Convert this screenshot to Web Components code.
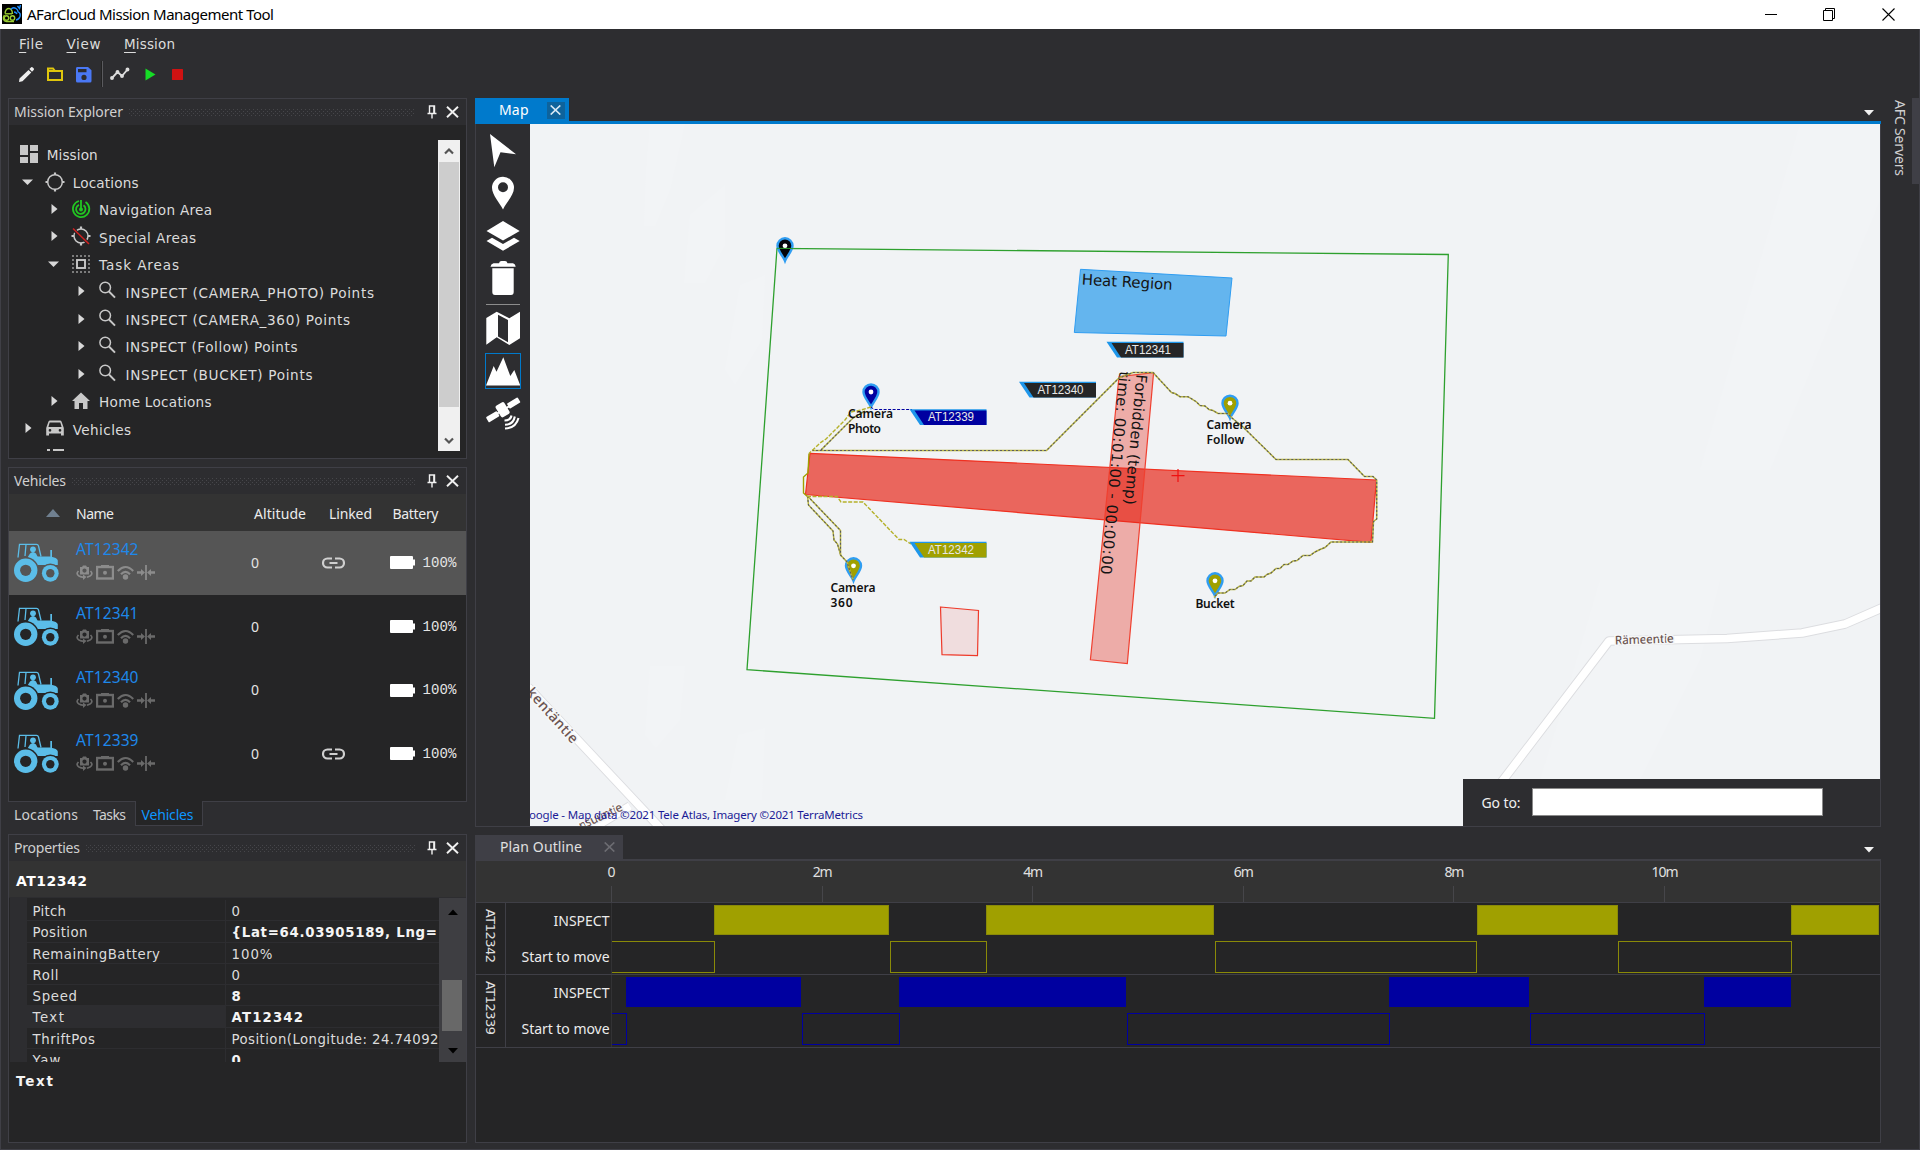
<!DOCTYPE html>
<html lang="en">
<head>
<meta charset="utf-8">
<title>AFarCloud Mission Management Tool</title>
<style>
html,body{margin:0;padding:0;height:100%;overflow:hidden;background:#2d2d30}
</style>
</head>
<body>
<afc-app></afc-app>
<script>
const SEG = '"Noto Sans","Open Sans",sans-serif';
const VER = '"DejaVu Sans",sans-serif';

function define(name, render, after) {
  customElements.define(name, class extends HTMLElement {
    connectedCallback() {
      if (this.shadowRoot) return;
      this.attachShadow({ mode: 'open' }).innerHTML = render(this);
      if (after) after(this);
    }
  });
}
const at = (el, n, d = '') => el.getAttribute(n) ?? d;

/* Text set to a given advance by spreading letter spacing */
define('fit-text', () => `<style>:host{display:inline-block;white-space:pre}span{display:inline-block}</style><span><slot></slot></span>`,
  el => {
    const w = +at(el, 'w', 0), s = el.shadowRoot.querySelector('span');
    const r = s.getBoundingClientRect(), n = el.textContent.length;
    const flat = getComputedStyle(el).writingMode === 'horizontal-tb';
    if (w && n > 1) s.style.letterSpacing = ((w - (flat ? r.width : r.height)) / (n - 1)) + 'px';
    if (w && flat) el.style.width = w + 'px';
  });

define('title-bar', () => `<style>
:host{display:flex;height:29px;background:#fff;align-items:center;font:15px/28px ${SEG};color:#000}
.ico{margin:-1px 5px 0 2px}.grow{flex:1}
svg{display:block;flex:none}.c{margin-right:46px}.c:last-child{margin-right:25px}
fit-text{margin-top:-1px}
</style>
<svg class="ico" width="20" height="20" viewBox="0 0 20 20"><rect width="20" height="20" fill="#000"/>
<g fill="none" stroke-width="1.4"><g stroke="#9acd32"><path d="M3 9.5Q3.5 4.500 7 4.500Q9 4.500 10 7L10.500 10M2.500 11Q1 13 1.500 15.500Q2.500 17.800 5 17.500H12"/><circle cx="4.500" cy="14" r="2.200"/><circle cx="10.500" cy="14" r="2.200"/><path d="M3 9.800H10"/></g>
<path stroke="#1e90ff" d="M9 5.500Q11 2.500 14 4.500Q16 5.800 16 7.800Q19 9 18 12.500Q17 15.500 14 16M15.500 2L17.500 4.500L18.500 1M12 8Q14 8 15 10"/></g></svg>
<fit-text w="247">AFarCloud Mission Management Tool</fit-text><span class="grow"></span>
<svg class="c" width="12" height="12" viewBox="0 0 12 12"><path d="M0 5.500H12" stroke="#000"/></svg>
<svg class="c" width="13" height="13" viewBox="0 0 13 13" fill="none" stroke="#000"><path d="M.5 2.500H9.500V12.500H.5ZM2.500 2.500V.5H11.500V10.500H9.500"/></svg>
<svg class="c" width="13" height="13" viewBox="0 0 13 13"><path d="M.5.5L12.500 12.500M12.500.5L.5 12.500" stroke="#000" stroke-width="1.100"/></svg>`);

define('menu-bar', () => `<style>
:host{display:flex;height:30px;font:13.500px/30px ${VER};color:#dcdcdc;padding-left:18px}
fit-text{margin-right:23.500px}u{text-underline-offset:3px}
</style><fit-text w="24"><u>F</u>ile</fit-text><fit-text w="34"><u>V</u>iew</fit-text><fit-text w="51"><u>M</u>ission</fit-text>`);

define('tool-bar', () => `<style>:host{display:flex;height:30px;align-items:center;margin-bottom:9px;padding-left:17px}svg{display:block;flex:none}
i{width:1px;height:26px;background:#5a5a5e;border-left:1px solid #222;margin:0 7px 0 9px}</style>
<svg width="17" height="17" viewBox="0 0 17 17" fill="#eee"><path d="M1 16L1.500 12.500L10.500 4L13.300 6.600L4.500 15.200ZM11.400 3.100L13.200 1.300Q14 .8 14.800 1.500L15.800 2.500Q16.300 3.200 15.700 4L14 5.800Z"/></svg>
<svg style="margin-left:11px" width="18" height="16" viewBox="0 0 18 16" fill="none" stroke="#e0c60c" stroke-width="2"><path d="M2 5H16V14H2ZM2 5V2.500H7L9 5"/></svg>
<svg style="margin-left:11px" width="17" height="17" viewBox="0 0 17 17"><path fill="#4a78f5" fill-rule="evenodd" d="M2 1H13L16.500 4.300V15Q16.500 16.500 15 16.500H2.500Q1 16.500 1 15V2.500Q1 1 2 1ZM3 3V6.200H11.500V3ZM9 8.800A2.600 2.600 0 1 0 9 14A2.600 2.600 0 1 0 9 8.800Z"/></svg>
<i></i>
<svg width="20" height="14" viewBox="0 0 20 14" stroke="#ddd" stroke-width="1.900" fill="#ddd"><path fill="none" d="M2 11L7.500 5L12 9L17.500 2.500"/><circle cx="2" cy="11" r="1"/><circle cx="7.500" cy="5" r="1"/><circle cx="12" cy="9" r="1"/><circle cx="17.500" cy="2.500" r="1"/></svg>
<svg style="margin-left:15px" width="11" height="13" viewBox="0 0 11 13"><path fill="#16dc26" d="M.5.5L10.500 6.500L.5 12.500Z"/></svg>
<svg style="margin-left:16px" width="11" height="11"><rect width="11" height="11" rx=".5" fill="#cf1212"/></svg>`);

/* Docked panel with caption, grip, pin and close */
define('dock-panel', el => `<style>
:host{display:flex;flex-direction:column;box-sizing:border-box;border:1px solid #3f3f46;background:#252526;overflow:hidden}
header{height:26px;flex:none;display:flex;align-items:center;background:#2d2d30;padding:0 7px 0 5px;font:14px/26px ${SEG};color:#d0d0d0}
.g{flex:1;margin:1px 12px 0 6px;height:8px}
svg{display:block;flex:none}slot{display:flex;flex-direction:column;flex:1;min-height:0}
</style><header><fit-text w="${at(el, 'tw')}">${at(el, 'caption')}</fit-text>
<svg class="g" height="8"><defs><pattern id="d" width="4" height="4" patternUnits="userSpaceOnUse"><path fill="#46464a" d="M0 0h1v1h-1zM2 2h1v1h-1z"/></pattern></defs><rect width="100%" height="7" fill="url(#d)"/></svg>
<svg width="10" height="14" viewBox="0 0 10 14" fill="none" stroke="#f1f1f1"><path d="M2.500 8V1H7.500V8M.5 8.500H9.500M5 9V13.500" stroke-width="1.400"/><path d="M6.700 1V8"/></svg>
<svg style="margin-left:9px" width="13" height="12" viewBox="0 0 13 12"><path d="M1 .7L12 11.300M12 .7L1 11.300" stroke="#f1f1f1" stroke-width="1.900"/></svg>
</header><slot></slot>`);

const G = '#c8c8c8';
const TREE = {
  mission: `<path fill="${G}" d="M0 0h8v10h-8zM10 0h8v6h-8zM0 12h8v6h-8zM10 8h8v10h-8z"/>`,
  loc: `<g fill="none" stroke="${G}" stroke-width="1.500"><circle cx="9" cy="9" r="7.300"/><path stroke-width="2.200" d="M9-.5V2M9 16V18.500M-.5 9H2M16 9H18.500"/></g>`,
  nav: `<g fill="none" stroke="#22c722" stroke-width="1.800"><path d="M13.500 2A8.200 8.200 0 1 1 7 1M11.500 5.300A4.700 4.700 0 1 1 7 4.800"/><path d="M9 0V9"/></g><circle cx="9" cy="9.500" r="2" fill="#22c722"/>`,
  spec: `<g fill="none" stroke="${G}" stroke-width="1.500"><circle cx="9" cy="9" r="7"/><path stroke-width="2.200" d="M9-.5V2M9 16V18.500M-.5 9H2M16 9H18.500"/><path stroke="#252526" stroke-width="3.500" d="M0 1L17 17"/><path stroke="#d02020" d="M1 1.500L17 17"/></g>`,
  task: `<g fill="none" stroke="${G}"><path stroke="#7c7c7c" stroke-width="2" stroke-dasharray="2 2" d="M0 1H18M0 17H18M1 4V16M17 4V16"/><rect x="5" y="5" width="8" height="8" stroke-width="1.900"/></g>`,
  mag: `<g fill="none" stroke="${G}" stroke-width="1.500"><circle cx="6.200" cy="5.500" r="5.300"/><path stroke-width="1.900" d="M10 9.500L16 15.700"/></g>`,
  home: `<path fill="${G}" d="M9 .5L18 9H15.500V17H11V11H7V17H2.500V9H0Z"/>`,
  car: `<path fill="${G}" fill-rule="evenodd" d="M2.500 2.500Q3 1.500 4 1.500H14Q15 1.500 15.500 2.500L17.800 9V16.500H15V14.500H3V16.500H.2V9ZM3.700 3.500L2.400 8H15.600L14.300 3.500ZM4 10A1.300 1.300 0 1 0 4 12.700A1.300 1.300 0 1 0 4 10ZM14 10A1.300 1.300 0 1 0 14 12.700A1.300 1.300 0 1 0 14 10Z"/>`,
  list: `<path fill="${G}" d="M1 2h3v3h-3zM7 2h11v3h-11z"/>`
};
define('tree-row', el => {
  const l = +at(el, 'level'), open = at(el, 'state') === 'open', leaf = at(el, 'state') === 'root';
  return `<style>:host{display:flex;height:27.45px;flex:none;align-items:center;font:13.600px/27px ${VER};color:#dcdcdc;padding-left:${leaf ? 11 : 9 + 26.4 * (l - 1)}px}
svg{display:block;flex:none;overflow:visible;margin-top:-3px}.a{margin-right:10px}.i{margin-right:8.700px}fit-text{margin-top:.6px}</style>
${leaf ? '' : `<svg class="a" width="18" height="12" viewBox="0 0 18 12" fill="#d8d8d8"><path d="${open ? 'M4 3.500H15L9.500 9Z' : 'M7.500 1V11L13.500 6Z'}"/></svg>`}
<svg class="i" width="18" height="18" viewBox="0 0 18 18">${TREE[at(el, 'icon')]}</svg><fit-text w="${at(el, 'w')}">${el.dataset.t}</fit-text>`;
});

define('tree-scroll', () => `<style>:host{display:flex;flex-direction:column;width:22px;background:#f0f0f0;margin-right:6px;flex:none}
b{background:#cdcdcd;margin:0 1px;height:245px}svg{display:block;height:22px;width:22px}.s{flex:1}</style>
<svg viewBox="0 0 22 22"><path d="M7 13.500L11 9.500L15 13.500" fill="none" stroke="#555" stroke-width="2.200"/></svg><b></b><span class="s"></span>
<svg viewBox="0 0 22 22"><path d="M7 9.500L11 13.500L15 9.500" fill="none" stroke="#555" stroke-width="2.200"/></svg>`);

const TREEROWS = [
  [0, 'root', 'mission', 51, 'Mission'], [1, 'open', 'loc', 66, 'Locations'], [2, '', 'nav', 113, 'Navigation Area'],
  [2, '', 'spec', 97, 'Special Areas'], [2, 'open', 'task', 80, 'Task Areas'], [3, '', 'mag', 248.5, 'INSPECT (CAMERA_PHOTO) Points'],
  [3, '', 'mag', 224.5, 'INSPECT (CAMERA_360) Points'], [3, '', 'mag', 172, 'INSPECT (Follow) Points'],
  [3, '', 'mag', 187, 'INSPECT (BUCKET) Points'], [2, '', 'home', 112.5, 'Home Locations'], [1, '', 'car', 58.5, 'Vehicles'], [1, '', 'list', 0, '']];
define('mission-tree', () => `<style>:host{display:flex;flex:1;min-height:0;padding:15px 0 7px}div{flex:1;overflow:hidden;display:flex;flex-direction:column;padding-top:1.900px}</style>
<div>${TREEROWS.map(r => `<tree-row level="${r[0]}" state="${r[1]}" icon="${r[2]}" w="${r[3]}" data-t="${r[4]}"></tree-row>`).join('')}</div><tree-scroll></tree-scroll>`);

define('tractor-icon', () => `<style>:host{display:block;width:46px;height:39px;flex:none}svg{display:block}</style>
<svg width="46" height="39" viewBox="0 0 46 39" fill="#5bbde8"><g fill="none" stroke="#5bbde8" stroke-width="1.300"><path d="M5 14.500L6.500 1.300H23.500Q25 1.300 25.500 3L28 13.500M13 1.500L12 13"/></g>
<circle cx="20" cy="6.300" r="2.900"/><path d="M17 10.500Q20 7.500 23 10.500L25 14.500H14.500ZM37.300 7H39V14H37.300Z"/>
<path d="M16 13.500H37Q44.500 14.500 44.800 17.500V22H25L25 32L14 20Z"/>
<g fill="var(--row)"><circle cx="12.700" cy="27.300" r="13.200"/><circle cx="37.300" cy="30.300" r="9.900"/></g>
<circle cx="12.700" cy="27.300" r="11.700"/><circle cx="37.300" cy="30.300" r="8.400"/>
<g fill="var(--row)"><circle cx="12.700" cy="27.300" r="5.600"/><circle cx="37.300" cy="30.300" r="4.200"/></g></svg>`);

define('vehicle-row', el => `<style>
:host{display:flex;height:63.700px;flex:none;align-items:center;padding-left:4px;color:#e4e4e4;background:var(--row);--row:#252526;--dim:#6a6a6a;box-sizing:border-box}
:host([selected]){--row:#555;--dim:#8c8c8c}
.n{width:175px;margin:-7px 0 0 17px;font:15.500px/22px ${SEG};color:#1e88ea}
.n fit-text{display:block}.s{display:flex;gap:3px;margin-top:5px}svg{display:block;flex:none}
.alt{font:14px/20px ${SEG};width:71px}.l{width:67.500px}.b{margin-right:8px}.p{font:14px/20px "Liberation Mono",monospace}
</style><tractor-icon></tractor-icon>
<div class="n"><fit-text w="62.500">${at(el, 'name')}</fit-text><div class="s">
<svg width="17" height="15" viewBox="0 0 17 15" fill="var(--dim)"><path fill-rule="evenodd" d="M4 2H6L7 .5H10L11 2H13V9.500H4ZM8.500 3.500A2.100 2.100 0 1 0 8.500 7.700A2.100 2.100 0 1 0 8.500 3.500Z"/><path fill="none" stroke="var(--dim)" stroke-width="1.700" d="M2.500 6Q-.5 9 3 11Q6 12.500 8 12M14.500 6Q17.500 9 14 11L11 12.200"/><path d="M7 9.500L10.500 12L7 15Z"/></svg>
<svg width="18" height="15" viewBox="0 0 18 15"><rect x="1" y="2" width="16" height="11.500" fill="none" stroke="var(--dim)" stroke-width="2.400"/><circle cx="9" cy="7.700" r="2" fill="var(--dim)"/><path fill="var(--dim)" d="M5 0H13V2H5Z"/></svg>
<svg width="17" height="15" viewBox="0 0 17 15" fill="none" stroke="var(--dim)" stroke-width="2.200"><path d="M.8 6Q8.500-2 16.200 6M4 9.300Q8.500 4.500 13 9.300"/><circle cx="8.500" cy="12" r="1.600" fill="var(--dim)"/></svg>
<svg width="18" height="15" viewBox="0 0 18 15" fill="var(--dim)"><path d="M8.100 0H9.900V15H8.100ZM0 6.300H4V4L8 7.500L4 11V8.700H0ZM18 6.300H14V4L10 7.500L14 11V8.700H18Z"/></svg>
</div></div>
<span class="alt">0</span>
<span class="l">${el.hasAttribute('linked') ? `<svg width="23" height="12" viewBox="0 0 23 12" fill="none" stroke="#d0d0d0" stroke-width="2.200"><path d="M10 1.500H5.500A4.500 4.500 0 0 0 5.500 10.500H10M13 1.500H17.500A4.500 4.500 0 0 1 17.500 10.500H13M7.500 6H15.500"/></svg>` : ''}</span>
<svg class="b" width="25" height="13" viewBox="0 0 25 13"><path fill="#fff" d="M1 0H22Q23 0 23 1V3.500H25V9.500H23V12Q23 13 22 13H1Q0 13 0 12V1Q0 0 1 0Z"/></svg>
<span class="p"><fit-text w="34">100%</fit-text></span>`);

define('vehicle-table', () => `<style>:host{display:flex;flex-direction:column;flex:1}
.h{height:37px;background:#333;display:flex;align-items:center;font:14px/36px ${SEG};color:#ececec;padding-left:37px}
svg{display:block;margin-right:16px}fit-text{margin-top:3px}</style>
<div class="h"><svg width="14" height="8"><path fill="#708090" d="M0 8L7 0L14 8Z"/></svg>
<fit-text w="38">Name</fit-text><fit-text style="margin-left:140px" w="52">Altitude</fit-text><fit-text style="margin-left:23px" w="43">Linked</fit-text><fit-text style="margin-left:20.500px" w="46">Battery</fit-text></div>
<vehicle-row selected linked name="AT12342"></vehicle-row><vehicle-row name="AT12341"></vehicle-row><vehicle-row name="AT12340"></vehicle-row><vehicle-row linked name="AT12339"></vehicle-row>`);

define('dock-tabs', () => `<style>:host{display:flex;height:24px;font:14px/26px ${SEG};color:#d0d0d0;padding-left:6px}
.on{color:#0e97ff;background:#252526;border:1px solid #3f3f46;border-top:0;margin:-1px 0 0 9px;padding:1px 8px 0 5.500px;height:23px;box-sizing:content-box;line-height:25px}</style>
<fit-text w="64">Locations</fit-text><fit-text style="margin-left:15px" w="33">Tasks</fit-text><div class="on"><fit-text w="52">Vehicles</fit-text></div>`);

define('prop-row', el => `<style>:host{display:flex;height:21.250px;flex:none;font:13.300px/23px ${VER};color:#dcdcdc;box-sizing:border-box;border-bottom:1px solid #2d2d30}
.k{width:199px;box-sizing:border-box;padding-left:5.500px;border-right:1px solid #2d2d30}.v{flex:1;padding-left:5.500px;overflow:hidden;white-space:nowrap}
:host([bold]) .v{font-weight:bold;color:#f4f4f4}:host([sel]) .k{background:#2d2d30}</style>
<div class="k"><fit-text w="${at(el, 'kw')}">${at(el, 'k')}</fit-text></div><div class="v"><fit-text w="${at(el, 'vw')}">${at(el, 'v')}</fit-text></div>`);

const PROPS = [['Pitch', 33.5, '0', 0, ''], ['Position', 55, '{Lat=64.03905189, Lng=', 205.5, 'bold'], ['RemainingBattery', 127.5, '100%', 41, ''], ['Roll', 26, '0', 0, ''],
  ['Speed', 44.5, '8', 0, 'bold'], ['Text', 31.5, 'AT12342', 71.5, 'bold sel'], ['ThriftPos', 62.5, 'Position(Longitude: 24.74092', 207, ''], ['Yaw', 28, '0', 0, 'bold']];
define('property-grid', () => `<style>:host{display:flex;flex-direction:column;flex:1}
.t{height:37px;background:#333;font:bold 14px/40px ${VER};color:#fff;padding-left:7px;border-bottom:1px solid #2d2d30;box-sizing:border-box}
.g{display:flex;height:164px;padding-left:1px}.gut{width:17px;background:#2d2d30;flex:none}
.rows{width:412px;flex:none;overflow:hidden;display:flex;flex-direction:column;padding-top:2px;box-sizing:border-box}
.sb{flex:1;background:#3e3e42;display:flex;flex-direction:column;align-items:center}
.sb b{width:20px;height:51px;background:#686868;margin:65px 1px 0 0}.sb svg{display:block}
.x{font:bold 13.500px/18px ${VER};color:#f4f4f4;padding:10px 7px}</style>
<div class="t"><fit-text w="71">AT12342</fit-text></div>
<div class="g"><div class="gut"></div><div class="rows">${PROPS.map(p => `<prop-row k="${p[0]}" kw="${p[1]}" v="${p[2]}" vw="${p[3]}" ${p[4]}></prop-row>`).join('')}</div>
<div class="sb"><svg style="margin-top:11px" width="10" height="6"><path d="M0 6L5 .5L10 6Z"/></svg><b></b><svg style="margin-top:17px" width="10" height="6"><path d="M0 0L5 5.500L10 0Z"/></svg></div></div>
<div class="x"><fit-text w="37">Text</fit-text></div>`);

const TOOLS = {
  cursor: `<path d="M5 2L31 22.300L15.500 20.300L9.300 35.300Z"/>`,
  pin: `<path fill-rule="evenodd" d="M18 1.700A11 11 0 0 1 29 12.700C29 20 21 28 18 34.500C15 28 7 20 7 12.700A11 11 0 0 1 18 1.700ZM18 7.300A5 5 0 1 0 18 17.300A5 5 0 1 0 18 7.300Z"/>`,
  layers: `<path d="M18 3L34.700 13L18 22.500L1.500 13ZM1.500 23L7 19.700L18 26L29 19.700L34.700 23L18 32.700Z"/>`,
  trash: `<path d="M14 3.200Q14.500 1 16.500 1H20Q22 1 22.500 3.200H28Q30.500 3.800 30.700 6.800H5.500Q5.800 3.800 8.500 3.200ZM7.300 8.200H28.700V32Q28.700 35 26 35H10Q7.300 35 7.300 32Z"/>`,
  map: `<path fill-rule="evenodd" d="M1.300 8L11.700 1.700L24.300 8.300L35 1.700V28.300L24.300 35L11.700 27.300L1.300 34.700ZM13 4.700V26.500L23 32.300V10Z"/>`,
  relief: `<path d="M1 32.500L8.700 13L11.500 18.700L18.300 4.300L25.300 23L29.300 17L35.300 32.500Z"/>`,
  sat: `<g transform="rotate(-31 18 14)"><rect x="24.500" y="10.500" width="12.500" height="6" rx="1"/><rect x="-.5" y="11.500" width="12.500" height="6" rx="1"/><rect x="12.800" y="6.800" width="10" height="13.500" rx="2"/><path d="M11 13h14v2h-14z"/></g><g fill="none" stroke="#fff" stroke-width="2.100"><path d="M26.500 19.500Q25.500 24.500 19.500 24.500M29.800 20.500Q28.500 28.500 20 28.700M33.500 22Q31 32 20 32.500"/></g>`
};
define('map-tool', el => `<style>:host{display:block;width:36px;height:36px;margin-bottom:6.800px;flex:none}:host([active]){outline:1px solid #007acc;outline-offset:-1px}svg{display:block}</style>
<svg width="36" height="36" viewBox="0 0 36 36" fill="#fff">${TOOLS[at(el, 'icon')]}</svg>`);
define('map-tools', () => `<style>:host{display:flex;flex-direction:column;width:54px;box-sizing:border-box;padding:8px 0 0 9px;background:#2d2d30;flex:none}hr{border:0;height:1px;width:34px;background:#8c8c8c;margin:1px 0 5px 1px;flex:none}</style>
<map-tool icon="cursor"></map-tool><map-tool icon="pin"></map-tool><map-tool icon="layers"></map-tool><map-tool icon="trash"></map-tool><hr>
<map-tool icon="map"></map-tool><map-tool icon="relief" active></map-tool><map-tool icon="sat"></map-tool>`);

/* Map canvas: everything is in window coordinates */
const flag = (x, y, c, t) => `<g><path fill="#1e96ea" d="M${x} ${y}H${x + 77}V${y + 15.800}H${x + 10.500}Z"/><path fill="${c}" d="M${x + 5} ${y + 1.200}H${x + 77}V${y + 15.800}H${x + 14.500}Z"/><text x="${x + 18.500}" y="${y + 12}" font-family="Liberation Sans" font-size="12" fill="#e8e8e8" textLength="46" lengthAdjust="spacingAndGlyphs">${t}</text></g>`;
const pin = (x, y, c) => `<g transform="translate(${x} ${y})"><path d="M0 14C-1.500 10 -7.500 4 -7.500 -1A7.500 7.500 0 0 1 7.500 -1C7.500 4 1.500 10 0 14Z" fill="${c}" stroke="#2f9df2" stroke-width="2.400"/><circle cy="-1" r="2.400" fill="#fff"/></g>`;
const lab = (x, y, w, t) => `<text x="${x}" y="${y}" textLength="${w}">${t}</text>`;
const route = d => `<path d="${d}" stroke="#b9b540" stroke-width="1.500"/><path d="${d}" stroke="#5c5c5c" stroke-width="1.100" stroke-dasharray="2 2"/>`;
define('map-canvas', () => `<style>:host{display:block;width:1350px;height:702px;flex:none}svg{display:block}</style>
<svg width="1350" height="702" viewBox="530 124 1350 702" fill="none">
<rect x="530" y="124" width="1350" height="702" fill="#f1f3f5"/>
<g fill="#f2f4f6"><path d="M650 124H685L670 190L655 226L644 226L646 170ZM690 215L725 185V245L705 283H684Z M740 285L765 275L762 340L735 385L725 370Z"/><path d="M650 666H685L680 720L656 748L645 735ZM738 735L765 728L762 800H725Z"/><path d="M1600 580L1565 700L1540 780H1640L1700 660L1720 580ZM1800 124L1740 330L1700 470H1770L1880 200V124Z"/></g>
<g stroke="#dcdde0" stroke-width="9.500" stroke-linejoin="round"><path d="M528 687L664 832M630 806L580 836M1500 784L1609 641L1727 638.500L1802 633L1845 624L1884 607"/></g>
<g stroke="#fff" stroke-width="7.700" stroke-linejoin="round"><path d="M528 687L664 832M630 806L580 836M1500 784L1609 641L1727 638.500L1802 633L1845 624L1884 607"/></g>
<g font-family="Noto Sans, sans-serif" font-weight="500" font-size="12" fill="#6b5451" stroke="#f6f7f8" stroke-width="3" paint-order="stroke">
<text transform="translate(526 693) rotate(48)" font-size="14" textLength="69">kentäntie</text>
<text transform="translate(581 830) rotate(-25)" textLength="47">nsuuntie</text>
<text transform="translate(1615 644.500) rotate(-2)" textLength="59">Rämeentie</text></g>
<path d="M777 248.300L1448.300 254.500L1434.500 718.300L747 669.700Z" stroke="#2ea02e" stroke-width="1.300"/>
<path d="M1080.500 269.300L1232 278L1226 336L1074.300 332.500Z" fill="#1e96ea" fill-opacity=".67" stroke="#2f9df2"/>
<path d="M810 453.300L1376.500 480L1371 542.300L805.500 494.500Z" fill="#e62314" fill-opacity=".68" stroke="#f03020" stroke-width="1.200"/>
<path d="M1119 376.700L1153.600 372.600L1127.300 663.600L1090.400 659.800Z" fill="#e62314" fill-opacity=".34" stroke="#f04030" stroke-width="1.200"/>
<path d="M940.500 607L978.500 610.500L977.500 655.700L942 654.700Z" fill="#f02014" fill-opacity=".1" stroke="#ee3a2a" stroke-width="1.200"/>
<path d="M1171.500 475.700H1184.500M1178 469V482" stroke="#f01010" stroke-width="1.200"/>
<g font-family="DejaVu Sans, sans-serif" font-size="15" fill="#141414">
<text transform="translate(1081.500 284.500) rotate(3.300)" textLength="91">Heat Region</text>
<text transform="translate(1136.500 374) rotate(95.300)" textLength="131">Forbidden (temp)</text>
<text transform="translate(1119.500 371) rotate(95.300)" textLength="204">time: 00:01:00 - 00:00:00</text></g>
${pin(785, 246.800, '#05050a')}<path d="M777 248.300L793 248.500" stroke="#2ea02e"/>
${pin(871, 393, '#0000a0')}${pin(853.500, 566.800, '#a0a000')}${pin(1230, 404.200, '#a0a000')}${pin(1215, 581.800, '#a0a000')}
<path d="M871 407L874 409.500H912" stroke="#0000a0" stroke-dasharray="3 1.500"/>
${route('M812 450.500H1046.500L1119 378L1133 372.500H1153L1171.500 392.500L1175 393.500L1180 396.700H1188L1196 401.500L1200 405.500L1205 406L1209 409.500L1213 410.500L1218 413.500H1228L1232 418L1243 427L1276 459.500H1348L1364.500 476.500H1373L1376.700 480V519L1373.500 521.500L1372.500 542H1331L1325 547.500L1320 549.500L1315 552L1310 555.500H1303L1297 560.500L1293 561L1288 564.500H1284L1280 568.500H1276L1271 573L1267 574.500L1264 577H1255L1251 581H1247L1243 585.500L1239 586.500L1235 589.500H1230L1225 593H1218L1214 597.500')}
<path d="M871 407L861 410L851 412L845 420L835 430L826 439L820 443L809 453.500" stroke="#b5b12a" stroke-width="1.400" stroke-dasharray="4 1.500"/>
<path d="M809 453.500L808 473L803.500 477V493L808 497" stroke="#a0a000" stroke-width="1.400"/>
${route('M821 450L853 418L865 411')}
${route('M807.500 496L808.500 505L833 531L834 540L837.500 544L841 556')}
${route('M807.500 496L840.500 530.500V555L847 562L853 580')}
<path d="M807 496.500H837L841 502H863L899 539.500H904L911 544" stroke="#b5b12a" stroke-width="1.400" stroke-dasharray="4 1.500"/>
<g font-family="Noto Sans, sans-serif" font-weight="600" font-size="12" fill="#101010">
${lab(848, 418, 45, 'Camera')}${lab(848, 433, 33, 'Photo')}${lab(830.500, 591.500, 45, 'Camera')}${lab(830.500, 606.500, 22, '360')}
${lab(1206.500, 429, 45, 'Camera')}${lab(1206.500, 444, 38, 'Follow')}${lab(1195.500, 607.500, 39, 'Bucket')}</g>
${flag(1106.500, 341.700, '#252526', 'AT12341')}${flag(1019, 381.700, '#252526', 'AT12340')}${flag(909.500, 409.200, '#0000a0', 'AT12339')}${flag(909.500, 541.700, '#a0a000', 'AT12342')}
<text x="529" y="819" font-family="Noto Sans, sans-serif" font-size="11.500" fill="#1c1c96" textLength="334">oogle - Map data ©2021 Tele Atlas, Imagery ©2021 TerraMetrics</text>
</svg>`);

define('goto-bar', () => `<style>:host{display:flex;align-items:center;width:417.500px;height:47px;background:#2d2d30;box-sizing:border-box;padding-left:19px;font:14px/46px ${SEG};color:#f0f0f0}
i{width:289px;height:26px;background:#fff;border:1px solid #8a8a8a;margin:-1px 0 0 11px}</style><fit-text w="39">Go to:</fit-text><i></i>`);

define('doc-tabs', el => `<style>:host{display:flex;flex:none;align-items:stretch}
.tab{display:flex;align-items:center;box-sizing:border-box;font:14px/22px ${SEG};background:var(--t)}
svg{display:block;flex:none}.grow{flex:1}.dd{margin:12px 7px 0 0;align-self:flex-start}
.x{display:grid;place-items:center;width:18px;height:17px}
:host([active]){height:23px;--t:#007acc;border-bottom:3px solid #007acc}:host(:not([active])){height:24px;--t:#3f3f46;border-bottom:2px solid #3f3f46}
:host([active]) .tab{width:94px;padding:1px 0 0 24px;color:#fff}:host([active]) .x{background:#0e639c;margin-left:18px}
:host(:not([active])) .tab{width:148px;padding-left:25px;color:#e0e0e0}:host(:not([active])) .x{margin-left:18px;--s:#6c6c72}</style>
<div class="tab"><fit-text w="${at(el, 'w')}">${at(el, 'caption')}</fit-text><span class="x"><svg width="11" height="10" viewBox="0 0 11 10"><path d="M.7.5L10.300 9.500M10.300.5L.7 9.500" stroke="var(--s,#d8e8f4)" stroke-width="1.700"/></svg></span></div>
<span class="grow"></span><svg class="dd" width="10" height="6"><path fill="#f1f1f1" d="M0 0H10L5 5.500Z"/></svg>`);

define('map-view', () => `<style>:host{display:block;height:729px;flex:none}
.b{display:flex;border:1px solid #3f3f46;border-top:0;height:702px}.c{position:relative}goto-bar{position:absolute;right:0;bottom:0}</style>
<doc-tabs active caption="Map" w="29.500"></doc-tabs><div class="b"><map-tools></map-tools><div class="c"><map-canvas></map-canvas><goto-bar></goto-bar></div></div>`);

/* One horizontal track; bars is a list of start-end window x values, starting at x=612 */
define('time-lane', el => {
  let x = 612;
  const out = at(el, 'kind') === 'open', first = s => out && s === 612;
  return `<style>:host{display:flex;height:${out ? 32 : 30}px;flex:none}
i{display:block;box-sizing:border-box;flex:none;border:1px solid var(--e);background:${out ? 'none' : 'var(--c)'}}</style>` +
    at(el, 'bars').split(' ').map(b => { const [s, e] = b.split('-').map(Number); const h = `<i style="margin-left:${s - x}px;width:${e - s}px;${first(s) ? 'border-left:0' : ''}"></i>`; x = e; return h; }).join('');
});
define('time-group', el => `<style>:host{display:flex;height:${at(el, 'h')}px;border-bottom:1px solid #3f3f46;flex:none}
.v{width:30px;border-right:1px solid #3f3f46;font:13px/29px ${VER};color:#e0e0e0;writing-mode:vertical-rl;padding-top:5.500px;box-sizing:border-box;height:100%}
.l{width:106px;padding-right:1.500px;border-right:1px solid #323234;box-sizing:border-box;font:14px/30px ${SEG};color:#ececec;text-align:right;padding-top:2.600px;display:flex;flex-direction:column;align-items:flex-end;gap:6px}
.t{padding-top:2px;display:flex;flex-direction:column;gap:6px;overflow:hidden;flex:1}</style>
<div class="v"><fit-text w="54">${at(el, 'name')}</fit-text></div><div class="l"><fit-text w="56">INSPECT</fit-text><fit-text w="88">Start to move</fit-text></div>
<div class="t"><time-lane kind="fill" bars="${at(el, 'a')}"></time-lane><time-lane kind="open" bars="${at(el, 'b')}"></time-lane></div>`);
define('time-ruler', () => `<style>:host{display:flex;height:41px;background:#333;border-bottom:1px solid #3f3f46;padding-left:30.200px;flex:none;overflow:hidden}
div{width:210.600px;flex:none;display:flex;flex-direction:column;align-items:center;font:14px/21px ${SEG};color:#e0e0e0}
i{width:1px;height:16px;background:#46464a;margin-top:4px}</style>${[['0', 8], ['2m', 20], ['4m', 20], ['6m', 20], ['8m', 20], ['10m', 27]].map(t => `<div><fit-text style="text-align:center" w="${t[1]}">${t[0]}</fit-text><i></i></div>`).join('')}`);
define('plan-outline', () => `<style>:host{display:flex;flex-direction:column;flex:1}
.b{border:1px solid #3f3f46;border-top:0;background:#252526;flex:1}
.y{--c:#a0a000;--e:#8a8a08}.z{--c:#0000a0;--e:#0000a0}</style>
<doc-tabs caption="Plan Outline" w="82"></doc-tabs><div class="b"><time-ruler></time-ruler>
<time-group class="y" h="71" name="AT12342" a="714-889 986-1214 1477-1618 1791-1879" b="612-715 890-987 1215-1477 1618-1792"></time-group>
<time-group class="z" h="72" name="AT12339" a="626-801 899-1126 1389-1529 1704-1791" b="612-627 802-900 1127-1390 1530-1705"></time-group></div>`);

define('side-strip', () => `<style>:host{display:flex;width:37px;justify-content:flex-end;flex:none}
fit-text{writing-mode:vertical-rl;font:14px/24px ${SEG};color:#d0d0d0;margin:2px .5px 0 0}i{width:7px;height:86px;background:#3f3f46}</style>
<fit-text w="76">AFC Servers</fit-text><i></i>`);

define('afc-app', () => `<style>:host{display:flex;flex-direction:column;width:1920px;height:1150px;background:#2d2d30;overflow:hidden}
.w{flex:1;border:1px solid #3f3f46;border-top:0;box-sizing:border-box;display:flex;flex-direction:column}
main{display:flex;height:1045px}.l{width:459px;margin:0 8px 0 7px;display:flex;flex-direction:column}.m{width:1406px;display:flex;flex-direction:column;gap:8px;flex:none}
side-strip{margin-left:auto}</style>
<title-bar></title-bar><div class="w"><menu-bar></menu-bar><tool-bar></tool-bar><main>
<div class="l"><dock-panel style="height:361px" caption="Mission Explorer" tw="109"><mission-tree></mission-tree></dock-panel>
<dock-panel style="height:335px;margin-top:8px" caption="Vehicles" tw="52"><vehicle-table></vehicle-table></dock-panel><dock-tabs></dock-tabs>
<dock-panel style="height:309px;margin-top:8px" caption="Properties" tw="66"><property-grid></property-grid></dock-panel></div>
<div class="m"><map-view></map-view><plan-outline></plan-outline></div><side-strip></side-strip></main></div>`);
</script>
</body>
</html>
